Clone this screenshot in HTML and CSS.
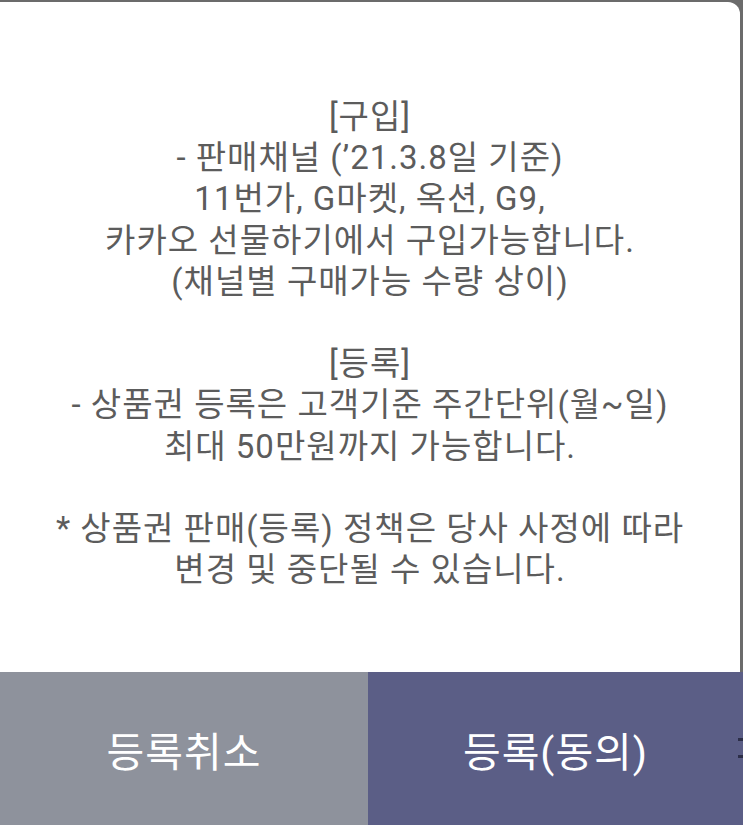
FILE: index.html
```html
<!DOCTYPE html>
<html lang="ko">
<head>
<meta charset="utf-8">
<link rel="stylesheet" href="styles.css">
</head>
<body>
<div class="screen">
  <div class="dialog">
    <div class="message">
      <p>[구입]<br>- 판매채널 (’21.3.8일 기준)<br>11번가, G마켓, 옥션, G9,<br>카카오 선물하기에서 구입가능합니다.<br>(채널별 구매가능 수량 상이)</p>
      <p>[등록]<br>- 상품권 등록은 고객기준 주간단위(월~일)<br>최대 50만원까지 가능합니다.</p>
      <p>* 상품권 판매(등록) 정책은 당사 사정에 따라<br>변경 및 중단될 수 있습니다.</p>
    </div>
  </div>
  <div class="actions">
    <button class="btn btn-cancel">등록취소</button>
    <button class="btn btn-ok">등록(동의)<span class="mark mark-a"></span><span class="mark mark-b"></span></button>
  </div>
</div>
</body>
</html>
```
FILE: styles.css
```css
html, body {
  margin: 0;
  padding: 0;
}
body {
  width: 743px;
  height: 825px;
  background: #6b6b6b;
  overflow: hidden;
  font-family: Roboto, "Noto Sans CJK KR", sans-serif;
}
.screen {
  display: flex;
  flex-direction: column;
  height: 825px;
  padding-top: 2px;
  box-sizing: border-box;
}
.dialog {
  flex: 1;
  background: #ffffff;
  margin-right: 3px;
  border-top-right-radius: 12px;
  display: flex;
  justify-content: center;
}
.message {
  padding-top: 94px;
  text-align: center;
  color: #5c5c5c;
  font-size: 33px;
  line-height: 41.2px;
  letter-spacing: 1px;
  white-space: nowrap;
}
.message p {
  margin: 0 0 41.2px 0;
}
.actions {
  display: flex;
  height: 153px;
}
.btn {
  border: 0;
  margin: 0;
  padding: 0;
  color: #ffffff;
  font-family: Roboto, "Noto Sans CJK KR", sans-serif;
  font-size: 41px;
  letter-spacing: 1px;
  position: relative;
}
.btn-cancel {
  width: 368px;
  background: #8e929c;
}
.btn-ok {
  flex: 1;
  background: #5b5e86;
}
.mark {
  position: absolute;
  right: 0;
  width: 5px;
  height: 3px;
  background: #2c2e48;
}
.mark-a { top: 66px; }
.mark-b { top: 83px; }
```
